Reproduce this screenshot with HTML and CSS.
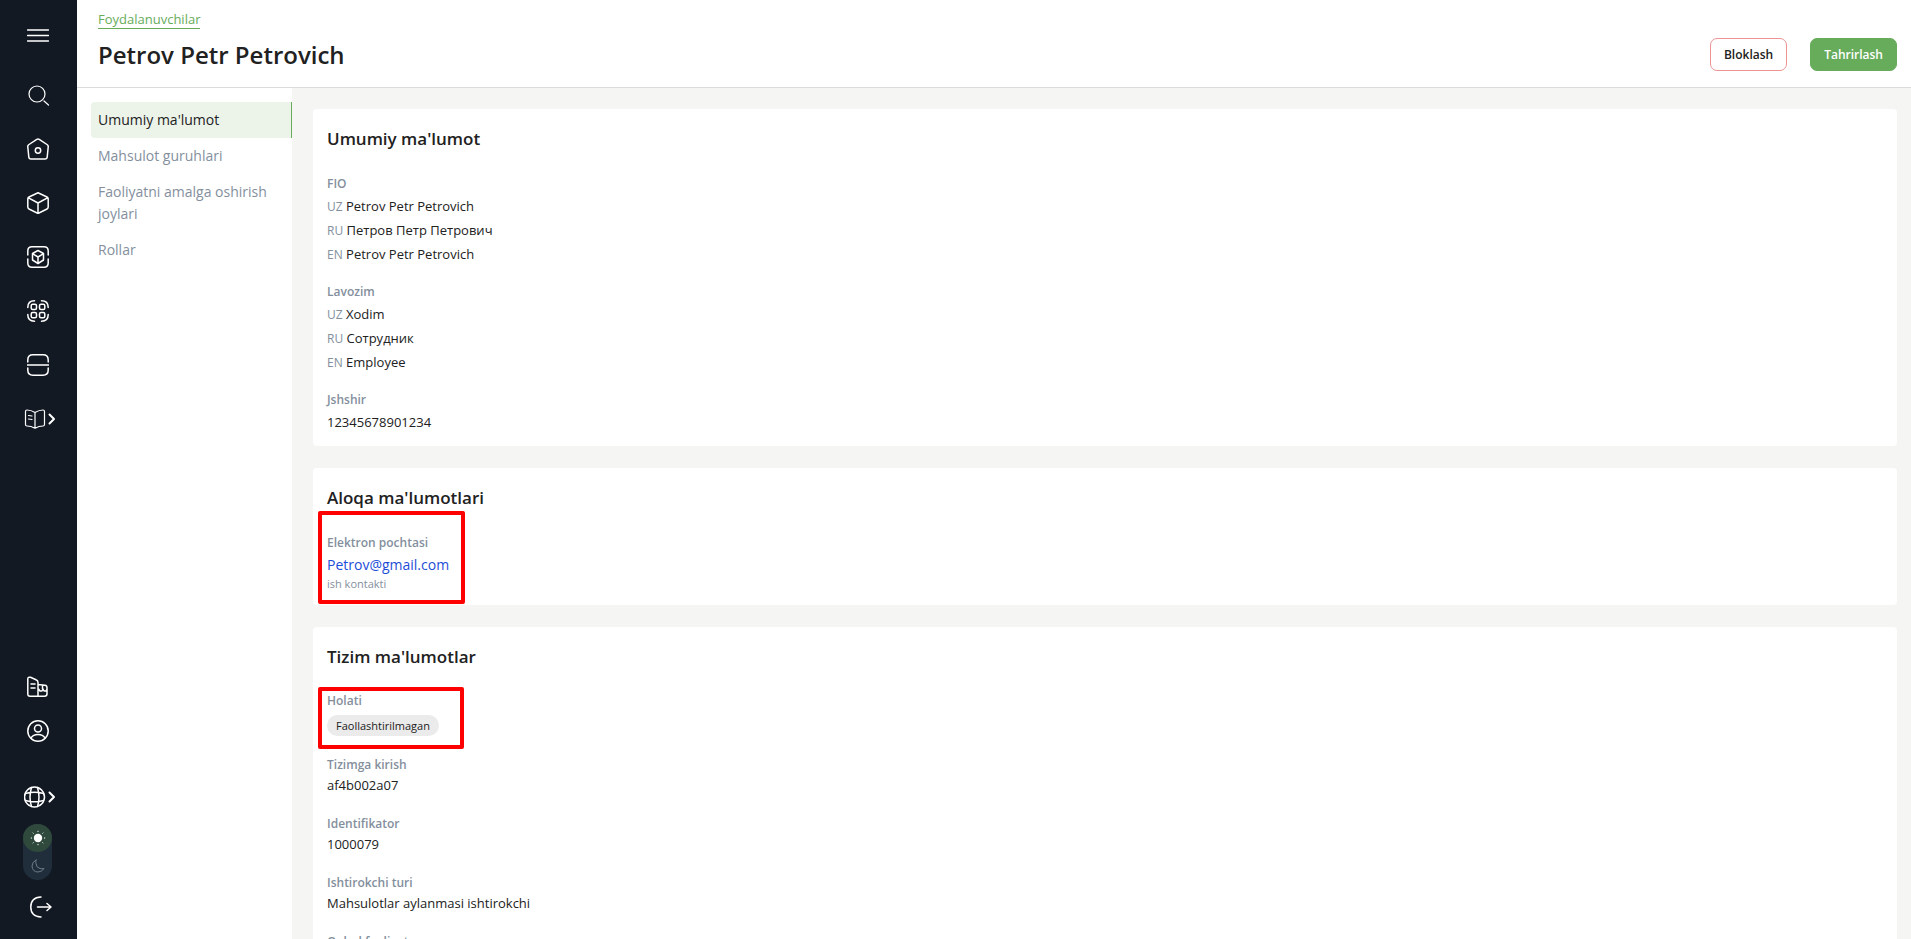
FILE: index.html
```html
<!DOCTYPE html>
<html lang="uz">
<head>
<meta charset="utf-8">
<title>Petrov Petr Petrovich</title>
<link rel="stylesheet" href="styles.css">
</head>
<body>
<div class="app">
  <nav class="rail" aria-label="Asosiy menyu">
    <div class="rail-group rail-top">
      <button class="icon-btn menu" aria-label="Menyu"><svg width="22" height="22" viewBox="0 0 22 22"><path d="M.5 5h21M.5 10.500h21M.5 16h21"/></svg></button>
      <button class="icon-btn thin" aria-label="Qidirish"><svg width="22" height="22" viewBox="0 0 22 22"><circle cx="10" cy="10" r="8"/><path d="M17 17l4.500 4"/></svg></button>
      <a class="icon-btn" href="#" aria-label="Bosh sahifa"><svg width="22" height="22" viewBox="0 0 22 22"><path d="M9.800 1.300Q11 .6 12.200 1.300L20 6.500Q21.500 7.500 21.200 9L20.200 19Q20 21 18 21H4Q2 21 1.800 19L.8 9Q.5 7.500 2 6.500Z"/><circle cx="11" cy="12.500" r="2.700"/></svg></a>
      <a class="icon-btn" href="#" aria-label="Mahsulotlar"><svg width="22" height="22" viewBox="0 0 22 22"><path d="M11 .8L20 5Q21.200 5.600 21.200 7v8q0 1.400-1.200 2L11 21.500 2 17Q.8 16.400.8 15V7Q.8 5.600 2 5ZM1.500 5.800L11 11l9.500-5.200M11 11v10"/></svg></a>
      <a class="icon-btn" href="#" aria-label="Qadoqlar"><svg width="22" height="22" viewBox="0 0 22 22"><path d="M.8 9V5Q.8.800 5 .8h12q4.200 0 4.200 4.200v4M.8 13v4q0 4.200 4.200 4.200h12q4.200 0 4.200-4.200v-4M11 4.500l5.500 3v6.500L11 17.500 5.500 14V7.500ZM5.500 7.700L11 11l5.500-3.300M11 11v6"/></svg></a>
      <a class="icon-btn" href="#" aria-label="Kodlar"><svg width="22" height="22" viewBox="0 0 22 22"><path d="M.8 7.500Q.8.800 7.500.8M14.500.8q6.700 0 6.700 6.700M.8 14.500q0 6.700 6.700 6.700M14.500 21.200q6.700 0 6.700-6.700"/><rect x="4.200" y="4.200" width="5.300" height="5.300" rx="1.500"/><rect x="12.500" y="4.200" width="5.300" height="5.300" rx="1.500"/><rect x="4.200" y="12.500" width="5.300" height="5.300" rx="1.500"/><rect x="12.500" y="12.500" width="5.300" height="5.300" rx="1.500"/></svg></a>
      <a class="icon-btn" href="#" aria-label="Skaner"><svg width="22" height="22" viewBox="0 0 22 22"><path d="M.8 8V6Q.8.800 6 .8h10q5.200 0 5.200 5.200v2M.8 14v2q0 5.200 5.200 5.200h10q5.200 0 5.200-5.200v-2M0 11h22"/></svg></a>
      <a class="icon-btn wide thin" href="#" aria-label="Ma'lumotnomalar"><svg width="32" height="22" viewBox="0 0 32 22"><path d="M11 4.500Q7 2 3 2 1.500 2 1.500 3.500v13Q1.500 18 3 18q4 0 8 2.200 4-2.200 8-2.200 1.500 0 1.500-1.500v-13Q20.500 2 19 2q-4 0-8 2.500ZM11 4.500v15.500M4.500 7.500l3.500.5M4.500 11l3.500.5"/><path class="chev" d="M25.500 6.500l4.500 4.500-4.500 4.500"/></svg></a>
    </div>
    <div class="rail-group rail-bottom">
      <a class="icon-btn" href="#" aria-label="Tashkilot"><svg width="22" height="22" viewBox="0 0 22 22"><path d="M11 20.200H3Q.8 20.200.8 18V3Q.8.800 3.500 1.200l5.500 2.500Q11 4.500 11 6.500v13.700h6.500q2.500 0 2.500-2.500v-6q0-2.200-2-2.500l-7-.6M4 8h4M4 12h4M11.500 13l1.500 2h2l1-2 1 2h2l1-2M15.500 9.500v3.500"/></svg></a>
      <a class="icon-btn" href="#" aria-label="Profil"><svg width="22" height="22" viewBox="0 0 22 22"><circle cx="11" cy="11" r="10.200"/><circle cx="11" cy="8.500" r="3.500"/><path d="M4 18q2-3.500 7-3.500t7 3.500"/></svg></a>
      <button class="icon-btn wide" aria-label="Til"><svg width="32" height="22" viewBox="0 0 32 22"><circle cx="10.500" cy="11" r="10"/><path d="M7.500 1.500q-3 9.500 0 19M13.500 1.500q3 9.500 0 19M1.500 7.500q9-2.500 18 0M1.500 14.500q9 2.500 18 0"/><path class="chev" d="M25.500 6.500l4.500 4.500-4.500 4.500"/></svg></button>
      <button class="theme" aria-label="Mavzu">
        <span class="theme-sun"><svg width="16" height="16" viewBox="0 0 16 16"><circle cx="8" cy="8" r="4.200" fill="#fff" stroke="none"/><path d="M8 1.200v.4M8 14.400v.4M1.200 8h.4M14.400 8h.4M3 3l.3.3M12.700 12.700l.3.3M3 13l.3-.3M12.700 3.300l.3-.3"/></svg></span>
        <span class="theme-moon"><svg width="16" height="16" viewBox="0 0 16 16"><path d="M6 2Q2 4 2 8q.5 6 6 6 4 0 6-3.500-2.500.5-4 0-4-1-4-5Q5.500 3.500 6 2Z"/></svg></span>
      </button>
      <button class="icon-btn logout" aria-label="Chiqish"><svg width="22" height="22" viewBox="0 0 22 22"><path d="M11 1Q.8 1.500.8 11T11 21M7.500 11H21M17 7.500l4 3.500-4 3.500"/></svg></button>
    </div>
  </nav>
  <div class="page">
    <header class="head">
      <div class="head-text">
        <a class="crumb" href="#">Foydalanuvchilar</a>
        <h1>Petrov Petr Petrovich</h1>
      </div>
      <div class="actions">
        <button class="btn btn-outline">Bloklash</button>
        <button class="btn btn-solid">Tahrirlash</button>
      </div>
    </header>
    <div class="body">
      <nav class="tabs" aria-label="Bo'limlar">
        <a class="tab active" href="#">Umumiy ma'lumot</a>
        <a class="tab" href="#">Mahsulot guruhlari</a>
        <a class="tab" href="#">Faoliyatni amalga oshirish joylari</a>
        <a class="tab" href="#">Rollar</a>
      </nav>
      <main class="content">
        <section class="card">
          <h2>Umumiy ma'lumot</h2>
          <dl class="fields multi">
            <div class="field"><dt>FIO</dt>
              <dd><span class="lang">UZ</span> Petrov Petr Petrovich</dd>
              <dd><span class="lang">RU</span> Петров Петр Петрович</dd>
              <dd><span class="lang">EN</span> Petrov Petr Petrovich</dd></div>
            <div class="field"><dt>Lavozim</dt>
              <dd><span class="lang">UZ</span> Xodim</dd>
              <dd><span class="lang">RU</span> Сотрудник</dd>
              <dd><span class="lang">EN</span> Employee</dd></div>
            <div class="field"><dt>Jshshir</dt><dd>12345678901234</dd></div>
          </dl>
        </section>
        <section class="card">
          <h2>Aloqa ma'lumotlari</h2>
          <dl class="fields">
            <div class="field marked mark-contact"><dt>Elektron pochtasi</dt>
              <dd><a class="mail" href="mailto:Petrov@gmail.com">Petrov@gmail.com</a></dd>
              <dd class="note">ish kontakti</dd></div>
          </dl>
        </section>
        <section class="card">
          <h2>Tizim ma'lumotlar</h2>
          <dl class="fields compact">
            <div class="field marked mark-status"><dt>Holati</dt><dd class="status"><span class="badge">Faollashtirilmagan</span></dd></div>
            <div class="field"><dt>Tizimga kirish</dt><dd>af4b002a07</dd></div>
            <div class="field"><dt>Identifikator</dt><dd>1000079</dd></div>
            <div class="field"><dt>Ishtirokchi turi</dt><dd>Mahsulotlar aylanmasi ishtirokchi</dd></div>
            <div class="field"><dt>Qabul faoliyat</dt></div>
          </dl>
        </section>
      </main>
    </div>
  </div>
</div>
</body>
</html>
```
FILE: styles.css
```css
*, *::after { box-sizing: border-box; }
body {
  margin: 0;
  font-family: "Open Sans", "Noto Sans", sans-serif;
  font-size: 14px;
  line-height: 22px;
  color: #212121;
  background: #fff;
}
h1, h2, dl, dd { margin: 0; }
a { color: inherit; text-decoration: none; }
button { font: inherit; cursor: pointer; }
.app { display: flex; height: 100vh; overflow: hidden; }

.rail {
  flex: none;
  width: 77px;
  background: #121923;
  display: flex;
  flex-direction: column;
  justify-content: space-between;
  padding: 25px 0 21px;
}
.rail-group { display: flex; flex-direction: column; align-items: center; padding-right: 2px; }
.rail-top { gap: 32px; }
.icon-btn { display: flex; padding: 0; border: 0; background: none; }
.icon-btn svg { fill: none; stroke: #fff; stroke-width: 1.5; stroke-linecap: round; stroke-linejoin: round; }
.thin svg { stroke-width: 1.2; }
.wide { padding-left: 4px; }
.menu { margin-bottom: 5px; }
.icon-btn .chev { stroke-width: 2; }
.rail-bottom .icon-btn { margin-bottom: 22px; }
.rail-bottom .icon-btn:nth-child(2) { margin-bottom: 44px; }
.rail-bottom .icon-btn:nth-child(3) { margin-bottom: 16px; }
.rail-bottom .logout { margin: 16px 0 0 6px; }
.theme {
  display: flex;
  flex-direction: column;
  padding: 0;
  border: 0;
  border-radius: 15px;
  background: #202d3b;
}
.theme span { display: grid; place-items: center; width: 29px; height: 28px; border-radius: 50%; }
.theme .theme-sun { background: #2f4a3c; }
.theme svg { fill: none; stroke: #fff; stroke-width: 1; stroke-linecap: round; }
.theme .theme-moon svg { stroke: #6e7a88; }

.page { flex: 1; min-width: 0; display: flex; flex-direction: column; }
.head {
  display: flex;
  justify-content: space-between;
  align-items: flex-end;
  padding: 10px 14px 16px 21px;
  border-bottom: 1px solid #dcdcdc;
}
.head-text { display: flex; flex-direction: column; align-items: flex-start; gap: 10px; }
.crumb {
  color: #67ac5b;
  font-size: 13px;
  line-height: 18px;
  border-bottom: 1px solid #67ac5b;
}
h1 { font-size: 24px; line-height: 32px; font-weight: 600; }
.actions { display: flex; gap: 23px; }
.btn {
  height: 33px;
  padding: 0 13px;
  border: 1px solid #67ac5b;
  border-radius: 7px;
  font-size: 12px;
  font-weight: 600;
}
.btn-outline { background: #fff; border-color: #ee9393; color: #212121; }
.btn-solid { background: #67ac5b; color: #fff; }

.body { flex: 1; min-height: 0; display: flex; }
.tabs { flex: none; width: 215px; padding: 14px 0 0 14px; }
.tab { display: block; padding: 7px; color: #848f9d; }
.tab.active {
  color: #212121;
  background: #ecf4ea;
  border-right: 1px solid #67ac5b;
  border-radius: 4px 0 0 4px;
}
.content {
  flex: 1;
  min-width: 0;
  overflow: hidden;
  background: #f5f5f4;
  padding: 21px 14px 0 21px;
  display: flex;
  flex-direction: column;
  gap: 22px;
}
.card { flex: none; background: #fff; border-radius: 4px; padding: 18px 14px 13px; }
h2 { font-size: 17px; line-height: 24px; font-weight: 600; }
.fields { display: flex; flex-direction: column; gap: 16px; margin-top: 22px; }
dt { color: #848f9d; font-size: 12px; font-weight: 600; line-height: 22px; }
.field dd { font-size: 13px; line-height: 22px; }
.multi dd + dd { margin-top: 2px; }
.lang { color: #848f9d; font-size: 12px; line-height: 1; }
.mail { color: #1d4ed8; font-size: 14px; line-height: 1; }
.field .note { color: #848f9d; font-size: 11px; line-height: 16px; }
.fields.compact { gap: 19px; }
.compact dt, .compact dd { line-height: 20px; }
.status { display: flex; padding-top: 4px; }
.badge { background: #ebebeb; border-radius: 11px; font-size: 11px; line-height: 21px; padding: 0 9px; }
.marked { position: relative; }
.marked::after {
  content: "";
  position: absolute;
  left: -9px;
  border: 4px solid #fe0000;
  border-radius: 2px;
}
.mark-contact::after { top: -21px; width: 147px; height: 93px; }
.mark-status::after { top: -4px; width: 146px; height: 62px; }
```
